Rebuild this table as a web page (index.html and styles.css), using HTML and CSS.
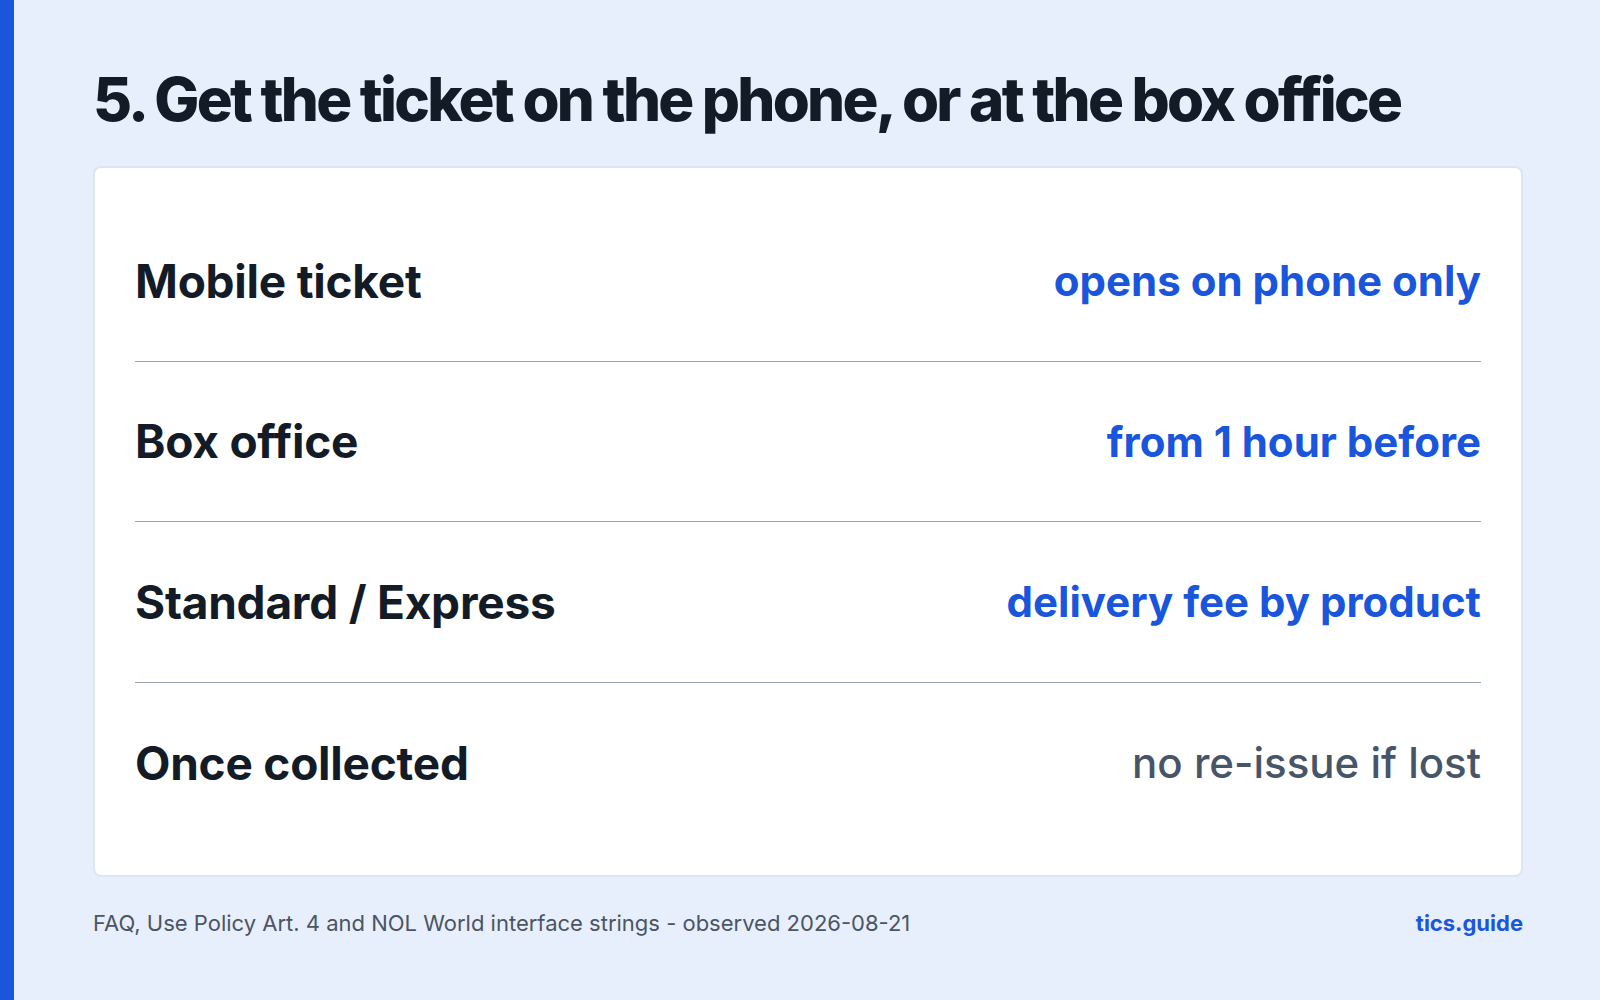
FILE: index.html
```html
<!DOCTYPE html>
<html lang="en">
<head>
<meta charset="utf-8">
<title>Get the ticket</title>
<link rel="stylesheet" href="styles.css">
</head>
<body>
<div class="page">
  <div class="accent"></div>
  <main class="main">
    <h1 class="title">5. Get the ticket on the phone, or at the box office</h1>
    <section class="card">
      <div class="row">
        <span class="label">Mobile ticket</span>
        <span class="value">opens on phone only</span>
      </div>
      <div class="row">
        <span class="label">Box office</span>
        <span class="value">from 1 hour before</span>
      </div>
      <div class="row">
        <span class="label">Standard / Express</span>
        <span class="value">delivery fee by product</span>
      </div>
      <div class="row">
        <span class="label">Once collected</span>
        <span class="value muted">no re-issue if lost</span>
      </div>
    </section>
    <footer class="footer">
      <span class="source">FAQ, Use Policy Art. 4 and NOL World interface strings - observed 2026-08-21</span>
      <span class="brand">tics.guide</span>
    </footer>
  </main>
</div>
</body>
</html>
```

FILE: styles.css
```css
html, body {
  margin: 0;
  padding: 0;
}
body {
  background: #e8effc;
  font-family: Inter, "Noto Sans", "Liberation Sans", sans-serif;
  color: #131b27;
}
.page {
  display: flex;
  width: 1600px;
  height: 1000px;
}
.accent {
  width: 14px;
  flex: none;
  background: #1a56db;
}
.main {
  flex: 1;
  padding: 69px 77px 0 79px;
  display: flex;
  flex-direction: column;
}
.title {
  margin: 0;
  font-size: 60px;
  line-height: 60px;
  font-weight: 800;
  letter-spacing: -0.046em;
  color: #131b27;
}
.card {
  margin-top: 37px;
  background: #ffffff;
  border: 2px solid #dde5f2;
  border-radius: 8px;
  padding: 33px 40px 32px;
  display: flex;
  flex-direction: column;
}
.row {
  height: 160.5px;
  box-sizing: border-box;
  display: flex;
  align-items: center;
  justify-content: space-between;
  border-bottom: 1.5px solid #98a2b3;
}
.row:last-child {
  border-bottom: none;
}
.label {
  font-size: 46px;
  font-weight: 700;
  letter-spacing: -0.005em;
  color: #131b27;
}
.value {
  font-size: 42px;
  font-weight: 700;
  color: #1a56db;
}
.value.muted {
  font-weight: 500;
  color: #475569;
}
.footer {
  margin-top: 33px;
  display: flex;
  justify-content: space-between;
  align-items: baseline;
  font-size: 22px;
}
.source {
  color: #4b5563;
}
.brand {
  font-weight: 700;
  color: #1a56db;
}
```
